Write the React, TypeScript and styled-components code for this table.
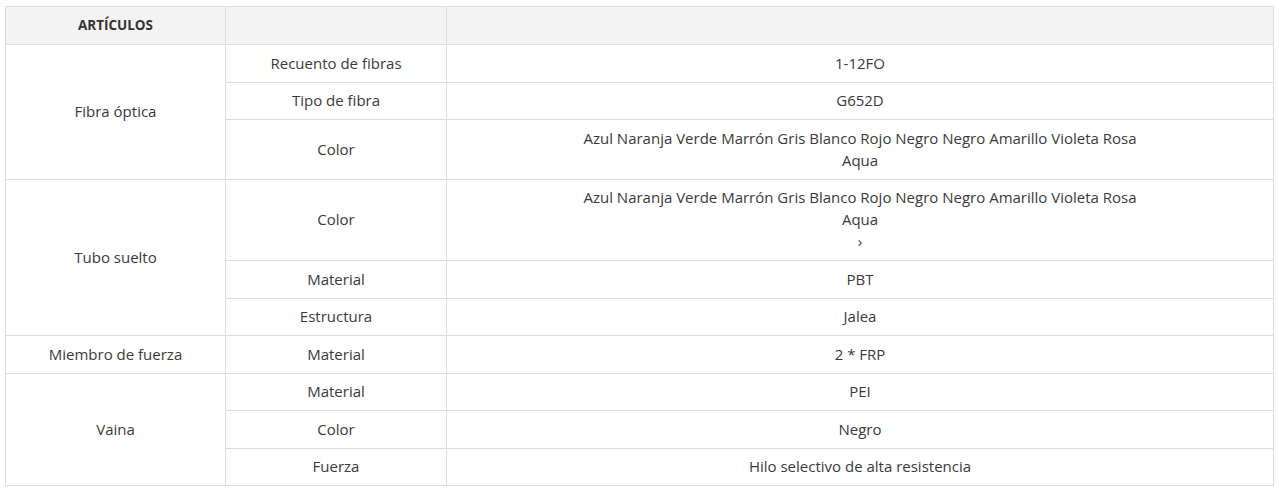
import styled, { createGlobalStyle } from "styled-components";

const GlobalStyle = createGlobalStyle`
  body {
    margin: 0;
    background: #fff;
  }
`;

interface Row {
  group?: string;
  span?: number;
  label: string;
  value: string[];
}

const rows: Row[] = [
  { group: "Fibra óptica", span: 3, label: "Recuento de fibras", value: ["1-12FO"] },
  { label: "Tipo de fibra", value: ["G652D"] },
  {
    label: "Color",
    value: ["Azul Naranja Verde Marrón Gris Blanco Rojo Negro Negro Amarillo Violeta Rosa", "Aqua"],
  },
  {
    group: "Tubo suelto",
    span: 3,
    label: "Color",
    value: ["Azul Naranja Verde Marrón Gris Blanco Rojo Negro Negro Amarillo Violeta Rosa", "Aqua", "›"],
  },
  { label: "Material", value: ["PBT"] },
  { label: "Estructura", value: ["Jalea"] },
  { group: "Miembro de fuerza", span: 1, label: "Material", value: ["2 * FRP"] },
  { group: "Vaina", span: 3, label: "Material", value: ["PEI"] },
  { label: "Color", value: ["Negro"] },
  { label: "Fuerza", value: ["Hilo selectivo de alta resistencia"] },
];

const App = () => {
  return (
    <>
      <GlobalStyle />
      <Wrapper>
        <SpecTable>
          <colgroup>
            <col style={{ width: 220 }} />
            <col style={{ width: 221 }} />
            <col />
          </colgroup>
          <thead>
            <tr>
              <HeadCell>ARTÍCULOS</HeadCell>
              <HeadCell />
              <HeadCell />
            </tr>
          </thead>
          <tbody>
            {rows.map((row, i) => (
              <tr key={i}>
                {row.group && <Cell rowSpan={row.span}>{row.group}</Cell>}
                <Cell>{row.label}</Cell>
                <Cell>
                  {row.value.map((line, j) => (
                    <span key={j}>
                      {j > 0 && <br />}
                      {line}
                    </span>
                  ))}
                </Cell>
              </tr>
            ))}
          </tbody>
        </SpecTable>
      </Wrapper>
    </>
  );
};

export default App;

const Wrapper = styled.div`
  padding: 6px 5px;
`;

const SpecTable = styled.table`
  width: 1269px;
  border-collapse: collapse;
  table-layout: fixed;
  font-family: "Open Sans", "Liberation Sans", sans-serif;
  font-size: 15px;
  line-height: 22px;
  color: #3a3a3a;
`;

const HeadCell = styled.th`
  background: #f3f3f3;
  border: 1px solid #dcdcdc;
  padding: 7px 10px 8px;
  font-weight: 700;
  font-size: 13.5px;
  color: #333;
  text-align: center;
`;

const Cell = styled.td`
  border: 1px solid #dcdcdc;
  padding: 6.5px 10px 8px;
  text-align: center;
  vertical-align: middle;
`;
